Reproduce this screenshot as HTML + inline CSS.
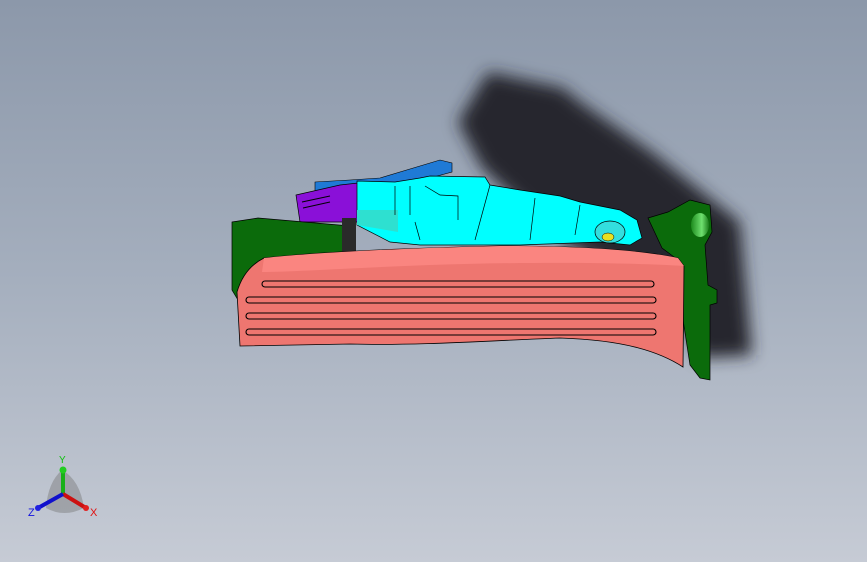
<!DOCTYPE html>
<html><head><style>
html,body{margin:0;padding:0;width:867px;height:562px;overflow:hidden}
body{background:linear-gradient(#8c98aa 0%,#a5afbe 50%,#c6cbd5 100%)}
svg{position:absolute;left:0;top:0}
</style></head><body>
<svg width="867" height="562" viewBox="0 0 867 562">
<defs>
<filter id="b" x="-30%" y="-30%" width="160%" height="160%"><feGaussianBlur stdDeviation="8"/></filter>
<linearGradient id="g2" x1="0" y1="0" x2="1" y2="0"><stop offset="0" stop-color="#1d8a1d"/><stop offset="0.6" stop-color="#6fe06f"/><stop offset="1" stop-color="#1a7a1a"/></linearGradient>
</defs>
<path d="M488,72 L563,88 L580,102 L652,152 L740,222 L752,355 L700,358 L670,300 L560,240 L482,168 L458,122 Z" fill="#25282d" filter="url(#b)"/>
<path d="M315,182 L350,180 L380,178 L440,160 L452,163 L452,172 L400,186 L340,192 L315,192 Z" fill="#1f7ad6" stroke="#000" stroke-width="0.6"/>
<path d="M296,195 L340,185 L358,183 L358,222 L300,222 Z" fill="#8a10d8" stroke="#000" stroke-width="0.7"/>
<path d="M302,202 L330,196 M303,208 L330,202" stroke="#000" stroke-width="1"/>
<path d="M357,181 L395,182 L420,178 L430,176 L485,177 L490,185 L520,190 L560,196 L580,202 L620,210 L637,220 L642,238 L630,245 L600,242 L520,245 L420,245 L390,242 L357,225 Z" fill="#00ffff" stroke="#000" stroke-width="0.7"/>
<path d="M357,210 L398,210 L398,232 L357,225 Z" fill="#2ee0d0"/>
<path d="M395,186 L395,215 M410,186 L410,215 M425,186 L440,195 L458,196 L458,220 M490,185 L475,240 M535,198 L530,240 M580,205 L575,235 M415,222 L420,240" stroke="#000" stroke-width="0.7" fill="none"/>
<ellipse cx="610" cy="232" rx="15" ry="11" fill="#33dede" stroke="#000" stroke-width="0.7"/>
<ellipse cx="608" cy="237" rx="6" ry="4" fill="#e8e020" stroke="#000" stroke-width="0.5"/>
<path d="M232,222 L258,218 L350,226 L355,268 L300,274 L262,280 L238,300 L232,290 Z" fill="#0b6b0b" stroke="#000" stroke-width="0.7"/>
<rect x="342" y="218" width="14" height="50" fill="#2a2a2a"/>
<path d="M648,218 L668,212 L690,200 L710,205 L712,232 L705,245 L708,285 L717,290 L717,303 L710,305 L710,380 L700,378 L690,365 L680,300 L678,260 L662,248 Z" fill="#0b6b0b" stroke="#000" stroke-width="0.7"/>
<ellipse cx="700" cy="225" rx="9" ry="12" fill="url(#g2)"/>
<path d="M264,258 C320,252 410,248 500,246 C580,246 640,250 678,258 L684,266 L683,367 C660,352 625,340 560,338 C500,340 420,346 350,344 L240,346 L237,292 Q244,268 264,258 Z" fill="#ee7670" stroke="#000" stroke-width="0.8"/>
<path d="M264,258 C320,252 410,248 500,246 C580,246 640,250 678,258 L684,266 C620,262 520,262 430,265 C350,268 290,272 262,272 Z" fill="#fa8580"/>
<g fill="none" stroke="#000" stroke-width="1.1">
<rect x="262" y="281" width="392" height="6" rx="3"/>
<rect x="246" y="297" width="410" height="6" rx="3"/>
<rect x="246" y="313" width="410" height="6" rx="3"/>
<rect x="246" y="329" width="410" height="6" rx="3"/>
</g>
<path d="M62,470 Q80,480 84,508 Q64,518 46,508 Q48,482 62,470 Z" fill="#777" opacity="0.45"/>
<line x1="63" y1="494" x2="63" y2="470" stroke="#18b018" stroke-width="4"/>
<circle cx="63" cy="470" r="3.5" fill="#22cc22"/>
<line x1="63" y1="494" x2="86" y2="508" stroke="#cc1010" stroke-width="4"/>
<circle cx="86" cy="508" r="3" fill="#e02020"/>
<line x1="63" y1="494" x2="38" y2="508" stroke="#1010cc" stroke-width="4"/>
<circle cx="38" cy="508" r="3" fill="#2020e0"/>
<text x="59" y="463" font-family="Liberation Sans,sans-serif" font-size="10" fill="#10c010">Y</text>
<text x="90" y="516" font-family="Liberation Sans,sans-serif" font-size="11" fill="#e01010">X</text>
<text x="28" y="516" font-family="Liberation Sans,sans-serif" font-size="11" fill="#1010e0">Z</text>
</svg>
</body></html>
